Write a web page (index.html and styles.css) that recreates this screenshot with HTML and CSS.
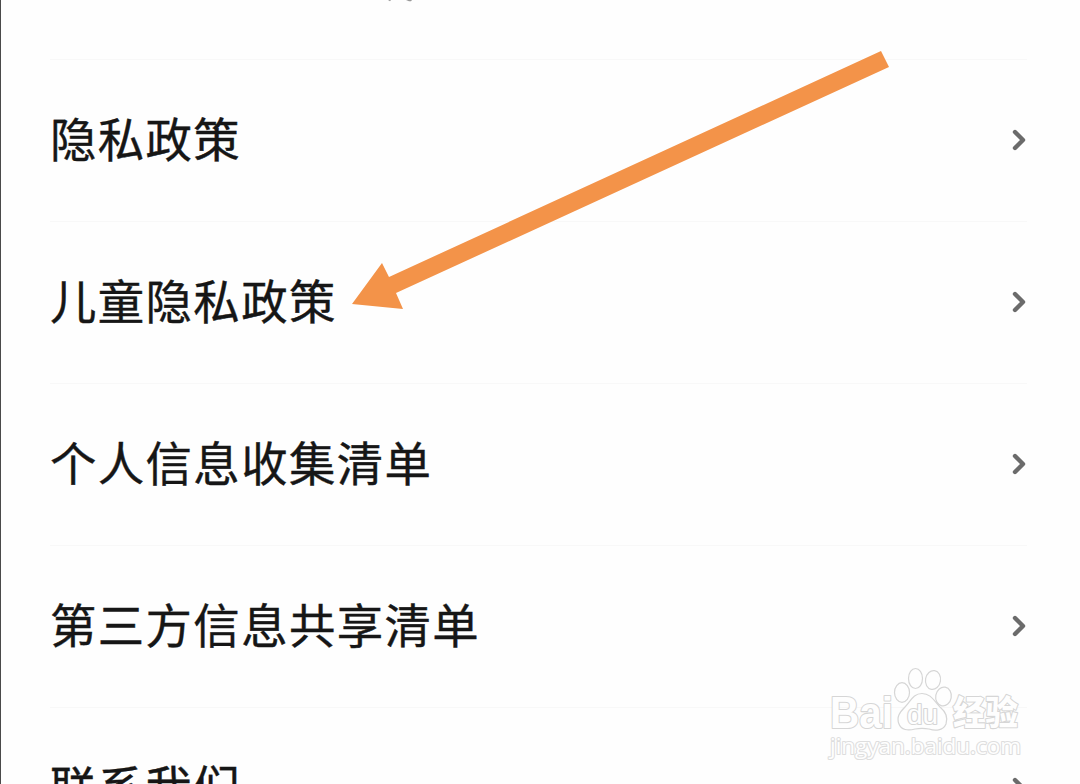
FILE: index.html
```
<!DOCTYPE html>
<html lang="zh-CN">

<head>
    <meta charset="utf-8">
    <meta name="viewport" content="width=device-width, initial-scale=1.0">
    <title>隐私政策</title>
    <link rel="stylesheet" href="styles.css">
</head>

<body>

    <main class="screen">
        <ul class="list">
            <li class="row row_top">
                <svg class="top_rest" viewBox="0 0 28 2"><path d="M1 0h3l-1 1.3zM19 0h6l-1 1.2h-2z" /></svg>
            </li>
            <li class="row">
                <span>隐私政策</span>
                <svg class="chevron" viewBox="0 0 16 24"><path d="M4 4l8 8-8 8" /></svg>
            </li>
            <li class="row">
                <span>儿童隐私政策</span>
                <svg class="chevron" viewBox="0 0 16 24"><path d="M4 4l8 8-8 8" /></svg>
            </li>
            <li class="row">
                <span>个人信息收集清单</span>
                <svg class="chevron" viewBox="0 0 16 24"><path d="M4 4l8 8-8 8" /></svg>
            </li>
            <li class="row">
                <span>第三方信息共享清单</span>
                <svg class="chevron" viewBox="0 0 16 24"><path d="M4 4l8 8-8 8" /></svg>
            </li>
            <li class="row">
                <span>联系我们</span>
                <svg class="chevron" viewBox="0 0 16 24"><path d="M4 4l8 8-8 8" /></svg>
            </li>
        </ul>

        <svg class="arrow" viewBox="0 0 538 262">
            <path d="M0 254L30 213 37 227 529 1 537 17 44 243 51 259z" />
        </svg>

        <svg class="watermark" viewBox="0 0 210 104">
            <text class="wm_bai" x="10" y="63" textLength="63" lengthAdjust="spacingAndGlyphs">Bai</text>
            <ellipse cx="82" cy="27.500" rx="7.500" ry="9.800" />
            <ellipse cx="95.500" cy="13.500" rx="7" ry="10" />
            <ellipse cx="113" cy="15" rx="7.500" ry="9.500" transform="rotate(10 113 15)" />
            <ellipse cx="123.500" cy="31.500" rx="7.800" ry="9.500" transform="rotate(10 123.500 31.500)" />
            <path d="M102 28.500C111 28.500 114 36 120 42 126 47 128 53 126 59 123 66 115 66 109 64 104 63 100 63 95 64 88 66 81 65 79 59 76 52 80 47 85 42 91 36 93 28.500 102 28.500z" />
            <text class="wm_du" x="87" y="59" textLength="31" lengthAdjust="spacingAndGlyphs">du</text>
            <text class="wm_cn" x="133" y="60" textLength="65" lengthAdjust="spacingAndGlyphs">经验</text>
            <text class="wm_url" x="10" y="89" textLength="191" lengthAdjust="spacingAndGlyphs">jingyan.baidu.com</text>
        </svg>
    </main>

</body>

</html>
```

FILE: styles.css
```
* {
    box-sizing: border-box;
}

body {
    margin: 0;
    background: #fefefe;
    font-family: "Noto Sans CJK SC", sans-serif;
    color: #161616;
}

.screen {
    position: relative;
    height: 784px;
    overflow: hidden;
    border-left: 1px solid #4a4a4a;
}

.list {
    list-style: none;
    margin: 0;
    padding: 0 53px 0 49px;
}

.row {
    display: flex;
    align-items: center;
    justify-content: space-between;
    height: 162px;
    padding-bottom: 1px;
    border-bottom: 1px solid #f8f8f8;
    font-size: 46.4px;
    letter-spacing: 1.4px;
    line-height: 1;
}

.row span {
    padding-bottom: 5px;
    -webkit-text-stroke: 0.4px #161616;
}

.row_top {
    height: 60px;
    align-items: flex-start;
    padding-left: 337px;
}

.top_rest {
    width: 28px;
    height: 2px;
    fill: #999;
}

.chevron {
    width: 16px;
    height: 24px;
    fill: none;
    stroke: #6b6b6b;
    stroke-width: 4.4;
    stroke-linecap: round;
    stroke-linejoin: round;
}

/* arrow pointing at the second row */
.arrow {
    position: absolute;
    left: 351px;
    top: 50px;
    width: 538px;
    height: 262px;
    fill: #f39349;
}

.watermark {
    position: absolute;
    left: 819px;
    top: 665px;
    width: 210px;
    height: 104px;
    fill: #fefefe;
    stroke: #d6d6d6;
    stroke-width: 1.2;
}

.watermark text {
    paint-order: stroke;
    stroke-width: 2.2;
    stroke-linejoin: round;
}

.wm_bai {
    font: bold 44px "Liberation Sans", sans-serif;
}

.watermark .wm_du {
    font: 27px "Liberation Sans", sans-serif;
}

.wm_cn {
    font: 900 34px "Noto Sans CJK SC", sans-serif;
}

.watermark .wm_url {
    font: 22px "Open Sans", sans-serif;
    stroke: #dedede;
}
```
